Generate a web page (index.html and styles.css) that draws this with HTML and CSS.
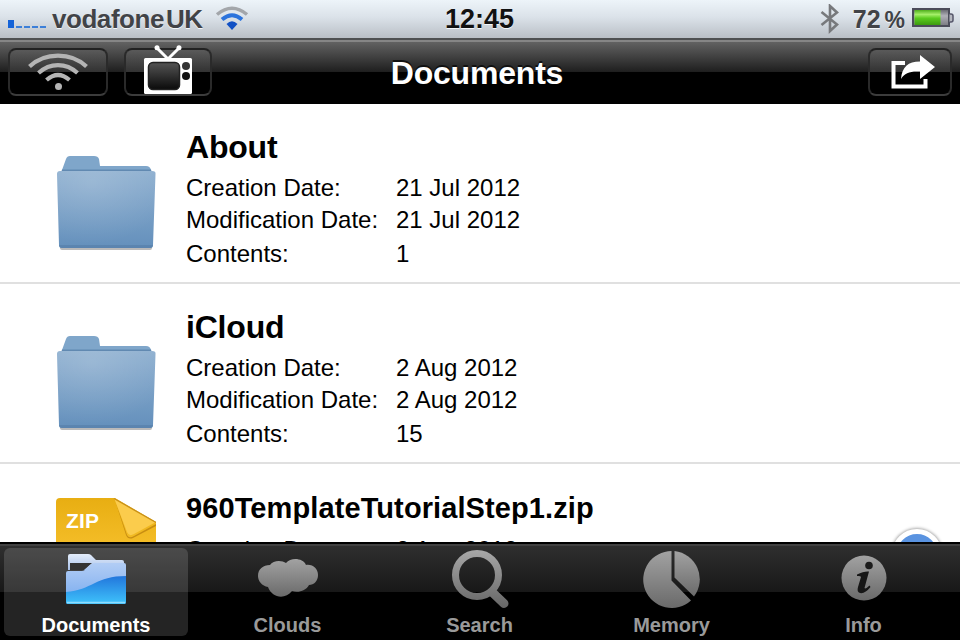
FILE: index.html
```html
<!DOCTYPE html>
<html lang="en">
<head>
    <meta charset="UTF-8">
    <meta name="viewport" content="width=device-width, initial-scale=1.0">
    <title>Documents</title>
    <link rel="stylesheet" href="styles.css">
</head>
<body>
    <!-- shared gradients and the folder shape -->
    <svg class="defs" width="0" height="0">
      <defs>
        <linearGradient id="folderFill" x1="0" y1="0" x2="0" y2="1">
          <stop offset="0" stop-color="#8fb0d0"/>
          <stop offset="1" stop-color="#6490bc"/>
        </linearGradient>
        <radialGradient id="folderShine" cx="0.35" cy="0.15" r="0.8">
          <stop offset="0" stop-color="#fff" stop-opacity="0.15"/>
          <stop offset="1" stop-color="#fff" stop-opacity="0"/>
        </radialGradient>
        <linearGradient id="grayFill" x1="0" y1="0" x2="0" y2="1">
          <stop offset="0" stop-color="#a2a2a2"/>
          <stop offset="1" stop-color="#6a6a6a"/>
        </linearGradient>
        <linearGradient id="screenFill" x1="0" y1="0" x2="0" y2="1">
          <stop offset="0" stop-color="#555"/>
          <stop offset="1" stop-color="#0a0a0a"/>
        </linearGradient>
        <symbol id="folder" viewBox="0 0 100 98">
          <rect x="4" y="90" width="92" height="5" rx="2" fill="#a9a9a9" opacity="0.8"/>
          <path d="M6 20V15L10 4Q11 1 14 1H38Q42 1 43 4L44 11H90Q94 11 95 15V20Z" fill="#7fa6ca"/>
          <path d="M6 14.500H95L96 18H5Z" fill="#6189b1"/>
          <path d="M1 19Q1 16 4 16H96Q100 16 99.500 19L97 90Q97 93 94 93H6Q3 93 3 90Z" fill="url(#folderFill)"/>
          <path d="M1 19Q1 16 4 16H96Q100 16 99.500 19L97 90Q97 93 94 93H6Q3 93 3 90Z" fill="url(#folderShine)"/>
          <path d="M3 90H97Q97 93 94 93H6Q3 93 3 90Z" fill="#557da7" opacity="0.6"/>
        </symbol>
      </defs>
    </svg>

    <div class="screen">
      <div class="status">
        <div class="carrier">
          <div class="signal"><i></i><i></i><i></i><i></i><i></i></div>
          <span class="network">vodafone<span class="country">UK</span></span>
          <svg class="statusWifi" width="34" height="26" viewBox="0 0 34 26" fill="none">
            <path d="M2 8.500Q17 -4 32 8.500" stroke="#a3a6aa" stroke-width="3.500"/>
            <path d="M7 13.500Q17 5 27 13.500" stroke="#2b73dc" stroke-width="4"/>
            <path d="M11.500 18Q17 12.500 22.500 18L17 24Z" fill="#1150c4"/>
          </svg>
        </div>
        <div class="clock">12:45</div>
        <div class="power">
          <svg width="20" height="30" viewBox="0 0 20 30" fill="none" stroke="#77797c" stroke-width="2.600">
            <path d="M1.500 8L17 20.500L10 27V2L17 8.500L1.500 21"/>
          </svg>
          <span class="percent">72<span class="sign">%</span></span>
          <svg width="42" height="22" viewBox="0 0 42 22">
            <defs>
              <linearGradient id="charge" x1="0" y1="0" x2="0" y2="1">
                <stop offset="0" stop-color="#4fae1c"/>
                <stop offset="0.300" stop-color="#a4ef68"/>
                <stop offset="0.550" stop-color="#5acb1e"/>
                <stop offset="1" stop-color="#3c9a10"/>
              </linearGradient>
              <linearGradient id="empty" x1="0" y1="0" x2="0" y2="1">
                <stop offset="0" stop-color="#5f6068"/>
                <stop offset="0.400" stop-color="#b0b0b8"/>
                <stop offset="1" stop-color="#77777f"/>
              </linearGradient>
            </defs>
            <rect x="1" y="1" width="36" height="17" fill="url(#empty)" stroke="#4b4c5a" stroke-width="2"/>
            <rect x="2.500" y="2" width="26" height="15" fill="url(#charge)"/>
            <path d="M37.500 6H39Q41 6 41 8V12Q41 14 39 14H37.500" fill="#b5b8c0" stroke="#55566a" stroke-width="1.500"/>
          </svg>
        </div>
      </div>

      <div class="navbar">
        <div class="navLeft">
          <div class="navButton wifi">
            <svg width="60" height="38" viewBox="0 0 60 38" fill="none" stroke="#b4b4b4" stroke-width="4.200">
              <path d="M1.500 14.500C17 0 43 0 58.500 14.500"/>
              <path d="M10.500 21C22 10.500 38 10.500 49.500 21"/>
              <path d="M18.500 28C26 21.500 34 21.500 41.500 28"/>
              <circle cx="30.500" cy="34.500" r="3.500" fill="#b4b4b4" stroke="none"/>
            </svg>
          </div>
          <div class="navButton tv">
            <svg width="50" height="49" viewBox="0 0 50 49">
              <path d="M14 3L25 14L36 3" fill="none" stroke="#fff" stroke-width="3"/>
              <circle cx="14" cy="2.800" r="2.500" fill="#fff"/>
              <circle cx="36" cy="2.800" r="2.500" fill="#fff"/>
              <rect x="1" y="13" width="48" height="36" rx="1.500" fill="#fff"/>
              <rect x="5.500" y="17.500" width="31" height="27" rx="4.500" fill="url(#screenFill)" stroke="#222" stroke-width="1.500"/>
              <circle cx="43" cy="21" r="4" fill="#343434"/>
              <circle cx="43" cy="31" r="4" fill="#111"/>
            </svg>
          </div>
        </div>
        <div class="title">Documents</div>
        <div class="navRight">
          <div class="navButton share">
            <svg width="46" height="36" viewBox="0 0 46 36">
              <path d="M15 9H3.500V32.500H35.500V25" fill="none" stroke="#fff" stroke-width="4"/>
              <path d="M11 25C12 13 18 7.500 30 7.500V1L45 13L30 25V17.500C20 17 15 18.500 11 25Z" fill="#fff"/>
            </svg>
          </div>
        </div>
      </div>

      <div class="list">
        <div class="row">
          <svg class="thumb folder"><use href="#folder"/></svg>
          <div class="details">
            <div class="name">About</div>
            <div class="info">
              <div>Creation Date:</div><div>21 Jul 2012</div>
              <div>Modification Date:</div><div>21 Jul 2012</div>
              <div>Contents:</div><div>1</div>
            </div>
          </div>
        </div>
        <div class="row">
          <svg class="thumb folder"><use href="#folder"/></svg>
          <div class="details">
            <div class="name">iCloud</div>
            <div class="info">
              <div>Creation Date:</div><div>2 Aug 2012</div>
              <div>Modification Date:</div><div>2 Aug 2012</div>
              <div>Contents:</div><div>15</div>
            </div>
          </div>
        </div>
        <div class="row">
          <svg class="thumb zip" viewBox="0 0 100 120">
            <defs>
              <linearGradient id="zipFill" x1="0" y1="0" x2="0" y2="1">
                <stop offset="0" stop-color="#e8ae12"/>
                <stop offset="0.400" stop-color="#f4bd28"/>
              </linearGradient>
            </defs>
            <path d="M0 4Q0 0 4 0H59L100 24V120H0Z" fill="url(#zipFill)"/>
            <path d="M59 2L71 37Q73 41 78 38L100 26V28L77 40Q72 42 70 37Z" fill="#b67c0c" opacity="0.7"/>
            <path d="M58 0L100 24L78 36Q73 39 71 34Z" fill="#fbcc4c"/>
            <path d="M58 0.500L100 24.500" stroke="#c89018" stroke-width="1.300"/>
            <text class="zipLabel" x="10" y="30" textLength="33">ZIP</text>
          </svg>
          <div class="details">
            <div class="name long">960TemplateTutorialStep1.zip</div>
            <div class="info">
              <div>Creation Date:</div><div>2 Aug 2012</div>
            </div>
          </div>
          <div class="disclosure"></div>
        </div>
      </div>

      <div class="tabbar">
        <div class="tab selected">
          <svg width="64" height="54" viewBox="0 0 64 54">
            <defs>
              <linearGradient id="tabBack" x1="0" y1="0" x2="0" y2="1">
                <stop offset="0" stop-color="#e4edfb"/>
                <stop offset="1" stop-color="#a9c2ea"/>
              </linearGradient>
              <linearGradient id="tabFront" x1="0" y1="0" x2="0" y2="1">
                <stop offset="0" stop-color="#b2cdf5"/>
                <stop offset="1" stop-color="#76a9ee"/>
              </linearGradient>
              <linearGradient id="tabLow" x1="0" y1="0" x2="0" y2="1">
                <stop offset="0" stop-color="#2276dc"/>
                <stop offset="1" stop-color="#3fc3fb"/>
              </linearGradient>
            </defs>
            <path d="M4 18V4Q4 2 6 2H24Q26 2 27 3L32 8H58Q60 8 60 10V18Z" fill="url(#tabBack)"/>
            <path d="M6 11H28L20 18H6Z" fill="#333"/>
            <path d="M2 21Q2 19 4 19H18Q20 19 22 17L26 13Q28 11 31 11H60Q62 11 62 13V50Q62 52 60 52H4Q2 52 2 50Z" fill="url(#tabFront)"/>
            <path d="M2 40C28 38 32 24 62 24V50Q62 52 60 52H4Q2 52 2 50Z" fill="url(#tabLow)"/>
            <path d="M3 50.500H61" stroke="#8fdcff" stroke-width="1.500"/>
          </svg>
          <div class="label">Documents</div>
        </div>
        <div class="tab">
          <svg width="60" height="54" viewBox="0 0 60 54">
            <path d="M10 37C4 36 0 31 0 26C0 19 5 15 12 15C15 10 24 10 28 13C33 7 45 8 48 15C55 14 60 19 60 25C60 31 56 35 51 35C48 41 40 43 34 41C27 50 14 48 10 37Z" fill="url(#grayFill)"/>
          </svg>
          <div class="label">Clouds</div>
        </div>
        <div class="tab">
          <svg width="60" height="60" viewBox="0 0 60 60">
            <defs>
              <linearGradient id="lens" gradientUnits="userSpaceOnUse" x1="0" y1="0" x2="0" y2="58">
                <stop offset="0" stop-color="#a8a8a8"/>
                <stop offset="1" stop-color="#666"/>
              </linearGradient>
            </defs>
            <circle cx="27" cy="25" r="21.500" fill="none" stroke="url(#lens)" stroke-width="7"/>
            <path d="M43 43L54 53.500" stroke="url(#lens)" stroke-width="9" stroke-linecap="round"/>
          </svg>
          <div class="label">Search</div>
        </div>
        <div class="tab">
          <svg width="58" height="60" viewBox="0 0 58 60">
            <path d="M28.500 1A28.500 28.500 0 1 0 48 50.500L28.500 30.500Z" fill="url(#grayFill)"/>
            <path d="M31.500 1A28.500 28.500 0 0 1 51 46.500L31.500 27.500Z" fill="url(#grayFill)"/>
          </svg>
          <div class="label">Memory</div>
        </div>
        <div class="tab">
          <svg width="46" height="60" viewBox="0 0 46 60">
            <circle cx="23" cy="28" r="22.500" fill="url(#grayFill)"/>
            <circle cx="28" cy="15.500" r="3.800" fill="#1c1c1c"/>
            <path d="M16 24.500Q23 21 28 21.500L23.500 38Q24.500 39.500 28.500 35.500L29.500 37Q24 44 19 43Q15.500 42 17 37L20 27Q19.500 25.500 16 26Z" fill="#161616"/>
          </svg>
          <div class="label">Info</div>
        </div>
      </div>
    </div>
</body>
</html>
```
FILE: styles.css
```css
* {
  box-sizing: border-box;
}

body {
  margin: 0;
  background-color: #000;
  font-family: "Liberation Sans", Arial, Helvetica, sans-serif;
}

svg {
  display: block;
  flex-shrink: 0;
}

.defs {
  position: absolute;
}

.screen {
  width: 960px;
  height: 640px;
  display: flex;
  flex-direction: column;
  overflow: hidden;
  background-color: #fff;
}

/* status bar */
.status {
  flex: none;
  height: 38px;
  display: grid;
  grid-template-columns: 1fr auto 1fr;
  align-items: center;
  padding: 0 6px 0 8px;
  background: linear-gradient(#edf4f9, #dbe2e9 45%, #b9bfc6);
  color: #414347;
  font-weight: bold;
  font-size: 26px;
  line-height: 36px;
  text-shadow: 0 1px 0 #f4f7fa;
}

.carrier, .power {
  display: flex;
  align-items: center;
}

.power {
  justify-content: flex-end;
}

.signal {
  display: flex;
  align-items: flex-end;
  gap: 2px;
  height: 8px;
  margin: 9px 6px 0 0;
}

.signal i {
  width: 6px;
  height: 2px;
  background-color: #3c7fd8;
}

.signal i:first-child {
  height: 8px;
  background-color: #1463d8;
}

.network {
  letter-spacing: -0.45px;
}

.country {
  margin-left: 2px;
}

.statusWifi {
  margin: 0 0 0 12px;
}

.clock {
  color: #111;
  font-size: 27px;
  margin-right: 3px;
}

.percent {
  margin: 0 7px 0 13px;
  font-size: 25px;
}

.sign {
  margin-left: 4px;
  font-size: 23px;
}

/* navigation bar */
.navbar {
  flex: none;
  height: 66px;
  display: grid;
  grid-template-columns: 1fr auto 1fr;
  padding: 8px 8px 0;
  border-top: 2px solid #4e5052;
  background: linear-gradient(#868686 0, #868686 2px, #626262 2px, #1e1e1e 32px, #000 32px);
}

.navLeft, .navRight {
  display: flex;
  gap: 16px;
}

.navRight {
  justify-content: flex-end;
}

.navButton {
  height: 48px;
  display: flex;
  justify-content: center;
  align-items: flex-end;
  border: 2px solid #2a2a2a;
  border-top-color: #222;
  border-bottom-color: #3c3c3c;
  border-radius: 8px;
  background: linear-gradient(rgba(255, 255, 255, 0.06), rgba(255, 255, 255, 0.09) 22px, transparent 22px);
}

.wifi {
  width: 100px;
  padding-bottom: 4px;
}

.tv {
  width: 88px;
}

.share {
  width: 84px;
  padding: 0 0 4px 6px;
}

.title {
  color: #fff;
  font-size: 32px;
  font-weight: bold;
  line-height: 50px;
  letter-spacing: -0.2px;
  margin-right: 6px;
  text-shadow: 0 -2px 0 #111;
}

/* file list */
.list {
  flex: 1;
  min-height: 0;
  overflow: hidden;
  color: #000;
}

.row {
  height: 180px;
  display: flex;
  align-items: flex-start;
  padding: 25px 18px 0 56px;
  border-bottom: 2px solid #e0e0e0;
}

.thumb {
  width: 100px;
  margin-right: 30px;
}

.folder {
  height: 98px;
  margin-top: 26px;
}

.zip {
  height: 120px;
  margin-top: 9px;
}

.zipLabel {
  fill: #fff;
  font-size: 21px;
  font-weight: bold;
}

.details {
  flex: 1;
}

.name {
  font-size: 32px;
  font-weight: bold;
  line-height: 36px;
  margin-bottom: 7px;
  letter-spacing: -0.2px;
}

.name.long {
  font-size: 29px;
  line-height: 38px;
  letter-spacing: 0.1px;
}

.info {
  display: grid;
  grid-template-columns: 210px auto;
  grid-template-rows: 32px 34px 34px;
  font-size: 24px;
  line-height: 32px;
}

.disclosure {
  width: 50px;
  height: 50px;
  margin-top: 40px;
  border: 5px solid #fff;
  border-radius: 50%;
  background-color: #5a93e0;
  box-shadow: 0 0 3px 1px #aaa;
}

/* tab bar */
.tabbar {
  flex: none;
  height: 98px;
  display: grid;
  grid-template-columns: repeat(5, 1fr);
  padding-top: 4px;
  border-top: 2px solid #000;
  background: linear-gradient(#414141 0, #414141 2px, #2f2f2f 2px, #181818 48px, #000 48px);
}

.tab {
  height: 88px;
  margin: 0 5px 0 4px;
  display: flex;
  flex-direction: column;
  align-items: center;
  justify-content: space-between;
  border-radius: 6px;
  color: #9a9a9a;
}

.tab svg {
  margin-top: 2px;
}

.tab.selected {
  margin-right: 4px;
  background-color: rgba(255, 255, 255, 0.14);
  color: #fff;
}

.tab.selected svg {
  margin-top: 4px;
}

.label {
  font-size: 20px;
  font-weight: bold;
  line-height: 22px;
}
```
